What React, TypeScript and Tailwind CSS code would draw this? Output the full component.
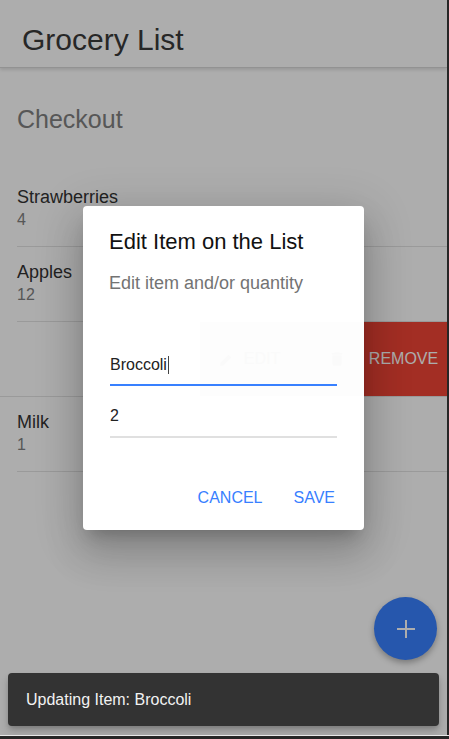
import React from "react";

const font = { fontFamily: '"Liberation Sans", Arial, sans-serif' };

function Item({ name, qty, inset = true }: { name: string; qty: string; inset?: boolean }) {
  return (
    <div className="h-[75px] flex flex-col">
      <div className="flex-1 pl-[17px] pt-[15px]">
        <div className="text-[18px] leading-[20px] text-[#333]">{name}</div>
        <div className="text-[16px] leading-[20px] mt-[3px] text-[#808080]">{qty}</div>
      </div>
      <div className={`h-px bg-[#e3e3e3] ${inset ? "ml-[17px]" : ""}`} />
    </div>
  );
}

export default function App() {
  return (
    <div className="w-full h-[739px] bg-[#262626] overflow-hidden" style={font}>
      <div className="relative w-[447px] h-[735px] bg-white overflow-hidden">
        {/* Header */}
        <div className="relative h-[68px] flex items-start pl-[22px] pt-[25px] border-b border-[#d8d8d8] shadow-[0_2px_3px_rgba(0,0,0,0.12)] bg-white">
          <span className="text-[30px] leading-[30px] text-[#3a3a3a]">Grocery List</span>
        </div>
        {/* Checkout header */}
        <div className="h-[104px] pl-[17px] pt-[37px]">
          <span className="text-[25px] leading-[28px] text-[#808080]">Checkout</span>
        </div>
        <Item name="Strawberries" qty="4" />
        <Item name="Apples" qty="12" />
        {/* swiped row */}
        <div className="h-[75px] flex flex-col">
          <div className="flex-1 flex justify-end">
            <div className="w-[87px] bg-[#f04436] flex items-center justify-center text-white text-[16px]">
              REMOVE
            </div>
          </div>
          <div className="h-px bg-[#e3e3e3]" />
        </div>
        <Item name="Milk" qty="1" />

        {/* FAB */}
        <div className="absolute left-[374px] top-[597px] w-[63px] h-[63px] rounded-full bg-[#3880ff] shadow-[0_3px_6px_rgba(0,0,0,0.3)] flex items-center justify-center">
          <svg width="22" height="22" viewBox="0 0 22 22">
            <path d="M11 2v18M2 11h18" stroke="white" strokeWidth="2" />
          </svg>
        </div>

        {/* Backdrop */}
        <div className="absolute inset-0 bg-black/[0.32]" />

        {/* Dialog */}
        <div className="absolute left-[83px] top-[206px] w-[281px] h-[324px] bg-white rounded-[4px] shadow-[0_11px_15px_-7px_rgba(0,0,0,0.2),0_24px_38px_3px_rgba(0,0,0,0.14),0_9px_46px_8px_rgba(0,0,0,0.12)] flex flex-col">
          <div className="absolute left-[117px] top-[116px] w-[164px] h-[74px] bg-[#fdfdfd] flex items-center justify-center gap-[8px]">
            <svg width="18" height="18" viewBox="0 0 24 24" fill="#fafafa">
              <path d="M3 17.25V21h3.75L17.81 9.94l-3.75-3.75L3 17.25z" />
            </svg>
            <span className="text-[16px] text-[#fafafa] mr-[40px]">EDIT</span>
            <svg width="18" height="18" viewBox="0 0 24 24" fill="#fafafa">
              <path d="M6 19c0 1.1.9 2 2 2h8c1.1 0 2-.9 2-2V7H6v12zM19 4h-3.5l-1-1h-5l-1 1H5v2h14V4z" />
            </svg>
          </div>
          <div className="relative pl-[26px] pt-[23px] text-[22px] leading-[26px] text-[#111]">Edit Item on the List</div>
          <div className="relative pl-[26px] mt-[17px] text-[18px] leading-[22px] text-[#737373]">Edit item and/or quantity</div>
          <div className="relative mx-[27px] mt-[61px] border-b-2 border-[#3880ff] pb-[9px]">
            <div className="text-[16px] leading-[20px] text-[#222] flex items-center">
              Broccoli<span className="inline-block w-px h-[18px] bg-[#444] ml-px" />
            </div>
          </div>
          <div className="relative mx-[27px] mt-[20px] border-b-2 border-[#e0e0e0] pb-[10px]">
            <div className="text-[16px] leading-[20px] text-[#222]">2</div>
          </div>
          <div className="relative flex justify-end pr-[29px] mt-[50px] gap-[31px] text-[16px] leading-[20px] text-[#3880ff]">
            <span>CANCEL</span>
            <span>SAVE</span>
          </div>
        </div>

        {/* Toast */}
        <div className="absolute left-[8px] top-[673px] w-[431px] h-[53px] bg-[#333333] rounded-[4px] shadow-[0_3px_5px_-1px_rgba(0,0,0,0.2),0_6px_10px_0_rgba(0,0,0,0.14)] flex items-center pl-[18px]">
          <span className="text-[16px] text-[#f2f2f2]">Updating Item: Broccoli</span>
        </div>
      </div>
      <div className="w-full h-px bg-[#e8e8e8]" />
    </div>
  );
}
